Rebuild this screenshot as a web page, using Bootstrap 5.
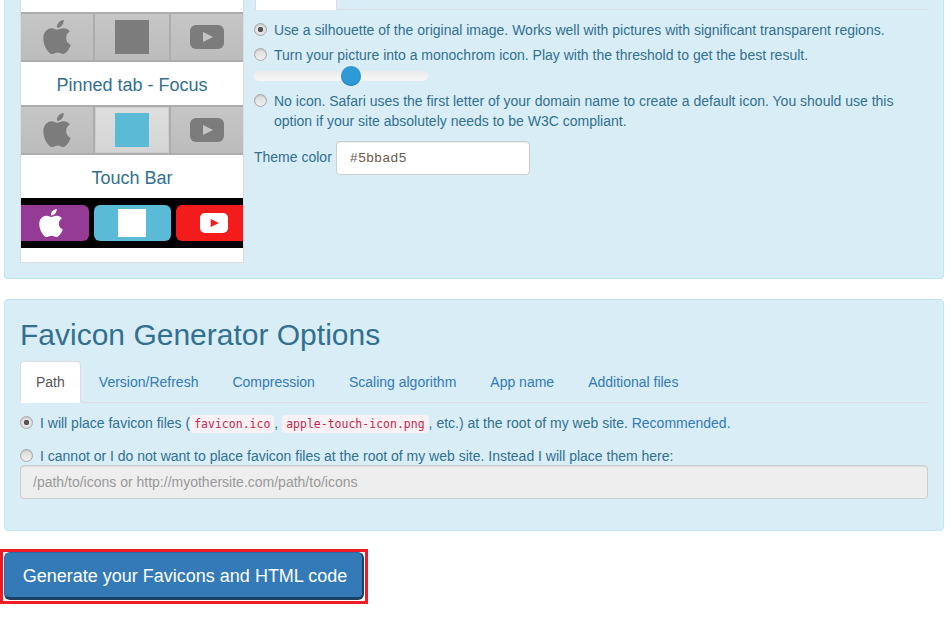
<!DOCTYPE html>
<html lang="en"><head><meta charset="utf-8"><title>Favicon Generator</title>
<link href="https://cdn.jsdelivr.net/npm/bootstrap@5.3.0/dist/css/bootstrap.min.css" rel="stylesheet">
<style>
html,body{height:636px;overflow:hidden}
body{font-family:"Liberation Sans",Arial,sans-serif;font-size:14px;line-height:20px;color:#31708f;background:#fff}
.shell{padding:0 7px 0 4px;width:951px}
.defs-holder{position:absolute}
.well-box{background:#d9edf7;border:1px solid #bce8f1;border-radius:4px;padding:0 15px}
.well-top{border-top:0;border-radius:0 0 4px 4px;height:279px;gap:10px}
.well-opts{margin-top:20px;height:232px;padding-top:18px}
.preview{width:224px;height:263px;flex:none;background:#fff;border:solid #ddd;border-width:0 1px 1px;padding-top:12px;overflow:hidden}
.cap{height:43px;font-size:18px;text-align:center;padding-top:13px;line-height:20px;color:#31708f}
.band{display:flex;height:50px;background:linear-gradient(#c6c6c6,#bcbcbc);border-top:2px solid #adadad;border-bottom:2px solid #adadad}
.tile{display:flex;align-items:center;justify-content:center;border-right:2px solid #adadad;width:74px;height:46px}
.tile-mid{width:76px;border-right:2px solid #adadad}
.tile-last{flex:1;border-right:0}
.tile-on{background:linear-gradient(#dedede,#d5d5d5);box-shadow:inset 0 0 0 1px #ccc}
.sq{width:34px;height:34px;background:#7c7c7c}
.sq-blue{background:#5bbad5}
.ic-apple{width:28px;height:34px;fill:#7c7c7c}
.ic-apple-w{width:24px;height:28px;fill:#fff}
.ic-yt{width:34px;height:24px;color:#7c7c7c;--pl:#c4c4c4}
.ic-yt-w{width:28px;height:20px;color:#fff;--pl:#f31b1b}
.tbar{background:#000;height:50px;display:flex;align-items:center;gap:5px}
.tkey{height:36px;border-radius:6px;display:flex;align-items:center;justify-content:center}
.k1{width:68px;background:#953b95;border-radius:0 6px 6px 0;padding-right:9px}
.k2{width:77px;background:#5bbad5;padding-right:1px}
.k3{flex:1;background:#f31b1b;border-radius:6px 0 0 6px;justify-content:flex-start;padding-left:24px}
.sq-white{width:28px;height:28px;background:#fff}
.opts{flex:1;min-width:0}
.tabline{height:10px;border-bottom:1px solid #ddd}
.tabstub{width:82px;height:10px;margin-left:1px;background:#fff;border:solid #ddd;border-width:0 1px}
.rad{display:flex;align-items:flex-start;gap:7px;padding:0}
.rad input{appearance:none;flex:none;width:13px;height:13px;margin:3px 0 0 0;border-radius:50%;background:linear-gradient(#dcdcdc,#efefef);border:1px solid #a8a8a8;box-shadow:inset 0 1px 1px #c4c4c4;display:block}
.rad input:checked{background:radial-gradient(circle,#555 0 2.5px,#e4e4e4 3px)}
.r1{margin-top:10px}.r2{margin-top:5px}.r3{margin-top:10px}
.slide{position:relative;width:174px;height:10px;margin-top:6px;background:linear-gradient(#ebebeb,#f7f7f7);border-radius:5px}
.knob{position:absolute;left:87px;top:-5px;width:20px;height:20px;border-radius:50%;background:#2e9bd6;box-shadow:inset 0 -1px 2px #2480b5}
.themerow{display:flex;align-items:center;gap:4px;margin-top:10px}
.themelbl{padding-bottom:2px}
.theme-in{width:194px;height:34px;font-family:"Liberation Mono",monospace;font-size:13.5px;color:#6b5b4b;border:1px solid #ccc;border-radius:4px;padding:6px 13px;background:#fff;box-shadow:inset 0 1px 1px rgba(0,0,0,.075)}
h2.ttl{font-family:"Liberation Sans",Arial,sans-serif;font-size:30px;font-weight:400;line-height:33px;margin:0 0 10px;color:#31708f}
.tabs-x{border-bottom:1px solid #ddd;display:flex;height:42px;list-style:none;padding:0;margin:0}
.tabs-x a{display:block;padding:10px 15px;height:42px;margin-right:2px;color:#337ab7;text-decoration:none;border:1px solid transparent;border-radius:4px 4px 0 0}
.tabs-x a.on{background:#fff;color:#555;border-color:#ddd #ddd transparent}
.rad-a{margin-top:10px}.rad-b{margin-top:12px;height:19px}
.lnk{color:#337ab7;text-decoration:none}
code.cd{font-family:"DejaVu Sans Mono",monospace;font-size:11.5px;color:#c7254e;background:#f9f2f4;padding:2px 4px;border-radius:4px}
.path-in{display:block;width:100%;height:34px;padding:6px 12px;font-size:14px;color:#999;background:#eee;border:1px solid #ccc;border-radius:4px;box-shadow:inset 0 1px 1px rgba(0,0,0,.075)}
.path-in::placeholder{color:#999;opacity:1}
.redframe{display:block;margin:18px 0 0 -4px;padding:0 1px 1px;border:3px solid #ed1c24;width:368px;height:55px}
.gen{display:block;width:100%;height:48px;font-size:18px;line-height:24px;color:#fff;background:#337ab7;border:1px solid #2e6da4;border-bottom:3px solid #1d3f60;border-right:2px solid #1d3f60;border-radius:6px;padding:2px 0 0 3px}
</style></head>
<body>
<svg width="0" height="0" class="defs-holder"><defs>
<symbol id="apl" viewBox="2 0 20 24" preserveAspectRatio="none"><path d="M12.152 6.896c-.948 0-2.415-1.078-3.96-1.04-2.04.027-3.91 1.183-4.961 3.014-2.117 3.675-.546 9.103 1.519 12.09 1.013 1.454 2.208 3.09 3.792 3.039 1.52-.065 2.09-.987 3.935-.987 1.831 0 2.35.987 3.96.948 1.637-.026 2.676-1.48 3.676-2.948 1.156-1.688 1.636-3.325 1.662-3.415-.039-.013-3.182-1.221-3.22-4.857-.026-3.04 2.48-4.494 2.597-4.559-1.429-2.09-3.623-2.324-4.39-2.376-2-.156-3.675 1.09-4.61 1.09zM15.53 3.83c.843-1.012 1.4-2.427 1.245-3.83-1.207.052-2.662.805-3.532 1.818-.78.896-1.454 2.338-1.273 3.714 1.338.104 2.715-.688 3.559-1.701"/></symbol>
<symbol id="yt" viewBox="0 0 34 24"><rect width="34" height="24" rx="6" fill="currentColor"/><path d="M13 7l10 5-10 5z" fill="var(--pl)"/></symbol>
</defs></svg>
<div class="shell">
  <div class="well-box well-top d-flex">
    <div class="preview">
      <div class="band">
        <div class="tile"><svg class="ic-apple"><use href="#apl"/></svg></div>
        <div class="tile tile-mid"><div class="sq"></div></div>
        <div class="tile tile-last"><svg class="ic-yt"><use href="#yt"/></svg></div>
      </div>
      <div class="cap">Pinned tab - Focus</div>
      <div class="band">
        <div class="tile"><svg class="ic-apple"><use href="#apl"/></svg></div>
        <div class="tile tile-mid tile-on"><div class="sq sq-blue"></div></div>
        <div class="tile tile-last"><svg class="ic-yt"><use href="#yt"/></svg></div>
      </div>
      <div class="cap">Touch Bar</div>
      <div class="tbar">
        <div class="tkey k1"><svg class="ic-apple-w"><use href="#apl"/></svg></div>
        <div class="tkey k2"><div class="sq-white"></div></div>
        <div class="tkey k3"><svg class="ic-yt-w"><use href="#yt"/></svg></div>
      </div>
    </div>
    <div class="opts">
      <div class="tabline"><div class="tabstub"></div></div>
      <label class="rad r1"><input type="radio" name="s" checked><span>Use a silhouette of the original image. Works well with pictures with significant transparent regions.</span></label>
      <label class="rad r2"><input type="radio" name="s"><span>Turn your picture into a monochrom icon. Play with the threshold to get the best result.</span></label>
      <div class="slide"><div class="knob"></div></div>
      <label class="rad r3"><input type="radio" name="s"><span>No icon. Safari uses the first letter of your domain name to create a default icon. You should use this<br>option if your site absolutely needs to be W3C compliant.</span></label>
      <div class="themerow"><span class="themelbl">Theme color</span><input class="theme-in" type="text" value="#5bbad5"></div>
    </div>
  </div>
  <div class="well-box well-opts">
    <h2 class="ttl">Favicon Generator Options</h2>
    <ul class="tabs-x">
      <li><a class="on" href="#">Path</a></li>
      <li><a href="#">Version/Refresh</a></li>
      <li><a href="#">Compression</a></li>
      <li><a href="#">Scaling algorithm</a></li>
      <li><a href="#">App name</a></li>
      <li><a href="#">Additional files</a></li>
    </ul>
    <label class="rad rad-a"><input type="radio" name="p" checked><span>I will place favicon files (<code class="cd">favicon.ico</code>, <code class="cd">apple-touch-icon.png</code>, etc.) at the root of my web site. <a class="lnk" href="#">Recommended.</a></span></label>
    <label class="rad rad-b"><input type="radio" name="p"><span>I cannot or I do not want to place favicon files at the root of my web site. Instead I will place them here:</span></label>
    <input class="path-in" type="text" placeholder="/path/to/icons or http://myothersite.com/path/to/icons" disabled>
  </div>
  <div class="redframe"><button class="gen" type="button">Generate your Favicons and HTML code</button></div>
</div>
<script src="https://cdn.jsdelivr.net/npm/bootstrap@5.3.0/dist/js/bootstrap.bundle.min.js"></script>
</body></html>
